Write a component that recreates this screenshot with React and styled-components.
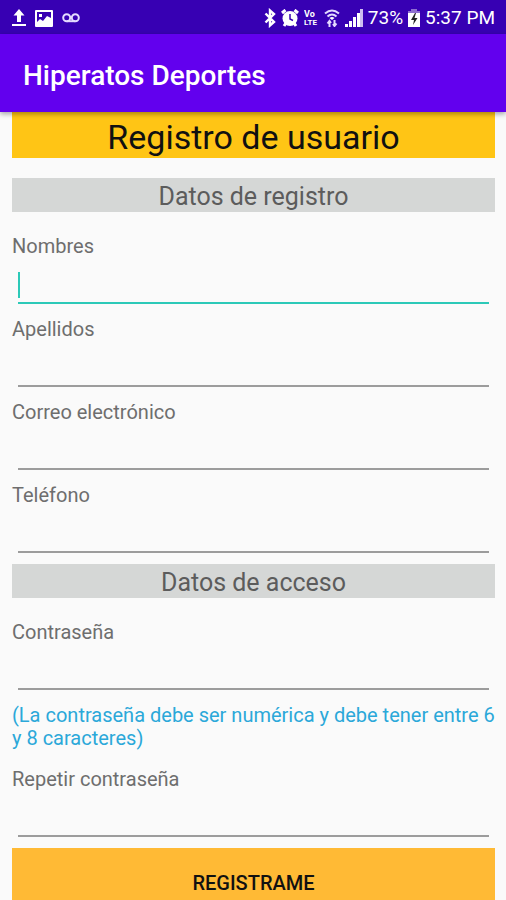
import React, { useState } from 'react'
import styled, { createGlobalStyle } from 'styled-components'

const GlobalStyle = createGlobalStyle`
  * {
    box-sizing: border-box;
  }
  body {
    margin: 0;
    background-color: #fafafa;
    font-family: Roboto, "Liberation Sans", sans-serif;
  }
`

const Screen = styled.div`
  height: 100vh;
  display: flex;
  flex-direction: column;
`

const StatusBar = styled.div`
  background-color: #3700b3;
  color: white;
  height: 34px;
  padding: 2px 11px 0 12px;
  display: flex;
  justify-content: space-between;
  align-items: center;
  flex-shrink: 0;
`

const StatusGroup = styled.div`
  display: flex;
  align-items: center;
  gap: ${props => props.$gap};
`

const StatusText = styled.span`
  font-size: 19px;
  line-height: 24px;
`

const AppBar = styled.header`
  background-color: #6200ee;
  height: 78px;
  padding: 4px 23px 0;
  display: flex;
  align-items: center;
  flex-shrink: 0;
  box-shadow: 0 2px 5px 0 rgba(0, 0, 0, 0.35);
  z-index: 1;
`

const AppTitle = styled.span`
  color: white;
  font-size: 28px;
  font-weight: 500;
`

const Form = styled.form`
  flex: 1;
  overflow-y: auto;
  scrollbar-width: none;
  padding: 0 11px 0 12px;
`

const Title = styled.h1`
  background-color: #ffc515;
  color: #111;
  font-size: 34px;
  font-weight: 400;
  line-height: 42px;
  text-align: center;
  padding-top: 4px;
  margin: 0 0 20px;
`

const SectionTitle = styled.h2`
  background-color: #d5d7d6;
  color: #5c5c5c;
  font-size: 25px;
  font-weight: 400;
  line-height: 30px;
  text-align: center;
  padding-top: 4px;
  margin: 0;
`

const Fields = styled.div`
  display: flex;
  flex-direction: column;
  gap: 13px;
  padding: 22px 0 11px;
`

const Label = styled.label`
  display: block;
  color: #6e6e6e;
  font-size: 20px;
  line-height: 24px;
`

const InputLine = styled.div`
  display: flex;
  align-items: flex-end;
  height: 46px;
  margin: 0 6px;
  border-bottom: 2px solid ${props => (props.$active ? '#2cc9b8' : '#9c9c9c')};
`

const Caret = styled.span`
  width: 2px;
  height: 26px;
  margin-bottom: 4px;
  background-color: #2cc9b8;
`

const Input = styled.input`
  flex: 1;
  min-width: 0;
  height: 34px;
  padding: 0;
  border: none;
  outline: none;
  background: transparent;
  color: #222;
  caret-color: ${props => (props.$hideCaret ? 'transparent' : '#2cc9b8')};
  font-family: inherit;
  font-size: 20px;
`

const Hint = styled.p`
  color: #2ba8d9;
  font-size: 20px;
  line-height: 23px;
  margin: 1px 0 4px;
`

const SubmitButton = styled.button`
  display: block;
  width: 100%;
  height: 70px;
  border: none;
  background-color: #ffba35;
  color: #111;
  font-family: inherit;
  font-size: 20px;
  font-weight: 500;
  cursor: pointer;
`

const UploadIcon = () => (
  <svg width="14" height="18" viewBox="0 0 14 18" fill="white">
    <path d="M7 0L12.5 6.5H9V13H5V6.5H1.5Z" />
    <rect x="0" y="15" width="14" height="2" />
  </svg>
)

const PictureIcon = () => (
  <svg width="18" height="17" viewBox="0 0 18 17">
    <path
      fill="white"
      fillRule="evenodd"
      d="M1 0H17Q18 0 18 1V16Q18 17 17 17H1Q0 17 0 16V1Q0 0 1 0ZM2 2V12L5 9L8 11L12 6L16 8V2Z"
    />
    <rect x="4" y="4" width="3" height="3" fill="white" />
  </svg>
)

const VoicemailIcon = () => (
  <svg width="18" height="10" viewBox="0 0 18 10" fill="none" stroke="#e4daff" strokeWidth="2">
    <circle cx="4.7" cy="4.7" r="3.5" />
    <circle cx="13.3" cy="4.7" r="3.5" />
    <path d="M4.7 8.2H13.3" />
  </svg>
)

const BluetoothIcon = () => (
  <svg width="12" height="20" viewBox="0 0 12 20" fill="none" stroke="white" strokeWidth="2.4">
    <path d="M1.5 5.5L10 14L6 17.5V2.5L10 6L1.5 14.5" />
  </svg>
)

const AlarmIcon = () => (
  <svg width="18" height="18" viewBox="0 0 18 18">
    <path d="M1 4L4.5 1M17 4L13.5 1M3 17L5 14M15 17L13 14" stroke="white" strokeWidth="3" />
    <circle cx="9" cy="9.5" r="7.5" fill="white" />
    <path d="M9 5V10L12 11.5" fill="none" stroke="#3700b3" strokeWidth="1.5" />
  </svg>
)

const VolteIcon = () => (
  <svg width="15" height="18" viewBox="0 0 15 18" fill="white" fontWeight="700">
    <text x="0" y="8" fontSize="9">Vo</text>
    <text x="0" y="16" fontSize="8">LTE</text>
  </svg>
)

const WifiIcon = () => (
  <svg width="16" height="18" viewBox="0 0 16 18" fill="none" stroke="#e4daff" strokeWidth="2">
    <path d="M1 4.5Q8 -1.5 15 4.5M3.5 7.5Q8 3.5 12.5 7.5" />
    <path d="M5.5 9Q8 7 10.5 9L8 11Z" fill="white" stroke="none" />
    <path d="M5.5 18V12M3.5 14.5L5.5 12L7 14M10.5 11V17M9 15L10.5 17L12.5 14.5" />
  </svg>
)

const SignalIcon = () => (
  <svg width="18" height="18" viewBox="0 0 18 18" fill="white">
    <rect x="0" y="15" width="3" height="3" />
    <rect x="4" y="12" width="3" height="6" />
    <rect x="8" y="8" width="3" height="10" />
    <rect x="12" y="4" width="3" height="14" />
    <rect x="15" y="0" width="3" height="18" fill="#cdbdf0" />
  </svg>
)

const BatteryIcon = () => (
  <svg width="12" height="18" viewBox="0 0 12 18">
    <path d="M3 0H9V2H12V5H0V2H3Z" fill="#8f6fd0" />
    <rect x="0" y="4" width="12" height="14" fill="white" />
    <path d="M7 4L3 11H6L5 16L9.5 9H6.5L8 4Z" fill="#222" />
  </svg>
)

const Field = ({ name, label, type = 'text', active, onFocus }) => {
  const [value, setValue] = useState('')
  const showCaret = active && value === ''

  return (
    <div>
      <Label htmlFor={name}>{label}</Label>
      <InputLine $active={active}>
        {showCaret && <Caret />}
        <Input
          id={name}
          name={name}
          type={type}
          value={value}
          $hideCaret={showCaret}
          onChange={e => setValue(e.target.value)}
          onFocus={() => onFocus(name)}
        />
      </InputLine>
    </div>
  )
}

const App = () => {
  const [active, setActive] = useState('nombres')
  const field = (name, label, type) => (
    <Field
      name={name}
      label={label}
      type={type}
      active={active === name}
      onFocus={setActive}
    />
  )

  return (
    <Screen>
      <GlobalStyle />
      <StatusBar>
        <StatusGroup $gap="9px">
          <UploadIcon />
          <PictureIcon />
          <VoicemailIcon />
        </StatusGroup>
        <StatusGroup $gap="5px">
          <BluetoothIcon />
          <AlarmIcon />
          <VolteIcon />
          <WifiIcon />
          <SignalIcon />
          <StatusText>73%</StatusText>
          <BatteryIcon />
          <StatusText>5:37 PM</StatusText>
        </StatusGroup>
      </StatusBar>
      <AppBar>
        <AppTitle>Hiperatos Deportes</AppTitle>
      </AppBar>
      <Form onSubmit={e => e.preventDefault()}>
        <Title>Registro de usuario</Title>
        <SectionTitle>Datos de registro</SectionTitle>
        <Fields>
          {field('nombres', 'Nombres')}
          {field('apellidos', 'Apellidos')}
          {field('correo', 'Correo electrónico', 'email')}
          {field('telefono', 'Teléfono', 'tel')}
        </Fields>
        <SectionTitle>Datos de acceso</SectionTitle>
        <Fields>
          {field('clave', 'Contraseña', 'password')}
          <Hint>(La contraseña debe ser numérica y debe tener entre 6 y 8 caracteres)</Hint>
          {field('clave2', 'Repetir contraseña', 'password')}
        </Fields>
        <SubmitButton type="submit">REGISTRAME</SubmitButton>
      </Form>
    </Screen>
  )
}

export default App
